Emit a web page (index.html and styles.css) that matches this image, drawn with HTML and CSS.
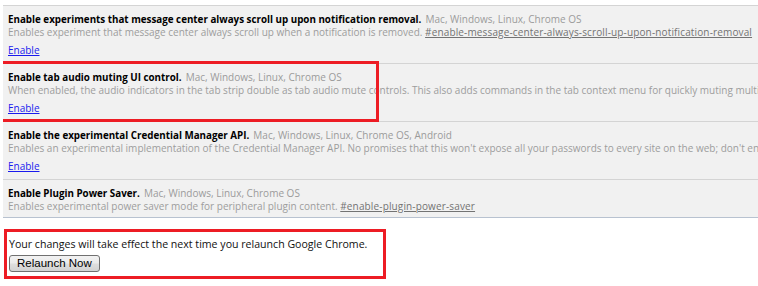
FILE: index.html
```html
<!DOCTYPE html>
<html>
<head>
<meta charset="utf-8">
<link rel="stylesheet" href="styles.css">
</head>
<body>
<div class="panel">
  <div class="row">
    <div class="title"><b>Enable experiments that message center always scroll up upon notification removal.</b> <span class="platforms">Mac, Windows, Linux, Chrome OS</span></div>
    <div class="desc">Enables experiment that message center always scroll up when a notification is removed. <a class="perm" href="#">#enable-message-center-always-scroll-up-upon-notification-removal</a></div>
    <div class="action"><a class="enable" href="#">Enable</a></div>
  </div>
  <div class="row highlighted">
    <div class="title"><b>Enable tab audio muting UI control.</b> <span class="platforms">Mac, Windows, Linux, Chrome OS</span></div>
    <div class="desc">When enabled, the audio indicators in the tab strip double as tab audio mute controls. This also adds commands in the tab context menu for quickly muting multiple selected tabs. <a class="perm" href="#">#enable-tab-audio-muting</a></div>
    <div class="action"><a class="enable" href="#">Enable</a></div>
    <div class="mark"></div>
  </div>
  <div class="row">
    <div class="title"><b>Enable the experimental Credential Manager API.</b> <span class="platforms">Mac, Windows, Linux, Chrome OS, Android</span></div>
    <div class="desc">Enables an experimental implementation of the Credential Manager API. No promises that this won't expose all your passwords to every site on the web; don't enable this unless you know what you're doing. <a class="perm" href="#">#enable-credential-manager-api</a></div>
    <div class="action"><a class="enable" href="#">Enable</a></div>
  </div>
  <div class="row">
    <div class="title"><b>Enable Plugin Power Saver.</b> <span class="platforms">Mac, Windows, Linux, Chrome OS</span></div>
    <div class="desc">Enables experimental power saver mode for peripheral plugin content. <a class="perm" href="#">#enable-plugin-power-saver</a></div>
    <div class="action"><a class="enable" href="#">Enable</a></div>
  </div>
</div>
<div class="notice">
  <div class="notice-text">Your changes will take effect the next time you relaunch Google Chrome.</div>
  <button class="relaunch" type="button">Relaunch Now</button>
</div>
</body>
</html>
```
FILE: styles.css
```css
html, body {
  margin: 0;
  padding: 0;
  background: #fff;
  overflow: hidden;
  width: 758px;
  height: 286px;
}

.panel {
  margin: 5px 0 0 3px;
  height: 211px;
  overflow: hidden;
  background: #f1f1f1;
  border-top: 1px solid #d4d4d4;
  border-bottom: 1px solid #b8c2d0;
}

.row {
  position: relative;
  padding: 4px 0 5px 5px;
  border-bottom: 1px solid #d4d4d4;
  white-space: nowrap;
}

.title {
  height: 15px;
  line-height: 15px;
  font-family: "Open Sans", "Noto Sans", sans-serif;
  color: #000;
}

.title b {
  font-weight: bold;
  font-size: 9.8px;
}

.platforms {
  font-size: 10px;
  color: #9b9b9b;
}

.desc {
  height: 15px;
  line-height: 15px;
  font-family: "Open Sans", "Noto Sans", sans-serif;
  font-size: 10px;
  color: #9d9d9d;
}

.perm {
  color: #737373;
  text-decoration: underline;
  letter-spacing: 0.14px;
}

.action {
  margin-top: 3px;
  height: 15px;
  line-height: 15px;
  font-family: "Open Sans", "Noto Sans", sans-serif;
  font-size: 10px;
}

.enable {
  color: #1a1aee;
  text-decoration: underline;
}

.mark {
  position: absolute;
  left: -3px;
  top: -3px;
  width: 379px;
  height: 61px;
  box-sizing: border-box;
  border: 3px solid #ed1c24;
}

.notice {
  margin: 11px 0 0 4px;
  width: 382px;
  height: 50px;
  box-sizing: border-box;
  border: 3px solid #ed1c24;
  padding: 5px 0 0 2px;
}

.notice-text {
  height: 14px;
  line-height: 14px;
  font-family: "Open Sans", "Noto Sans", sans-serif;
  font-size: 10.6px;
  color: #111;
  white-space: nowrap;
}

.relaunch {
  display: block;
  margin-top: 4px;
  height: 17px;
  padding: 0 7px;
  font-family: "Liberation Sans", Arial, sans-serif;
  font-size: 11.5px;
  line-height: 15px;
  color: #000;
  border: 1px solid #707070;
  border-radius: 3px;
  background: linear-gradient(#f2f2f2, #ebebeb 45%, #dddddd 55%, #d2d2d2);
}
```
